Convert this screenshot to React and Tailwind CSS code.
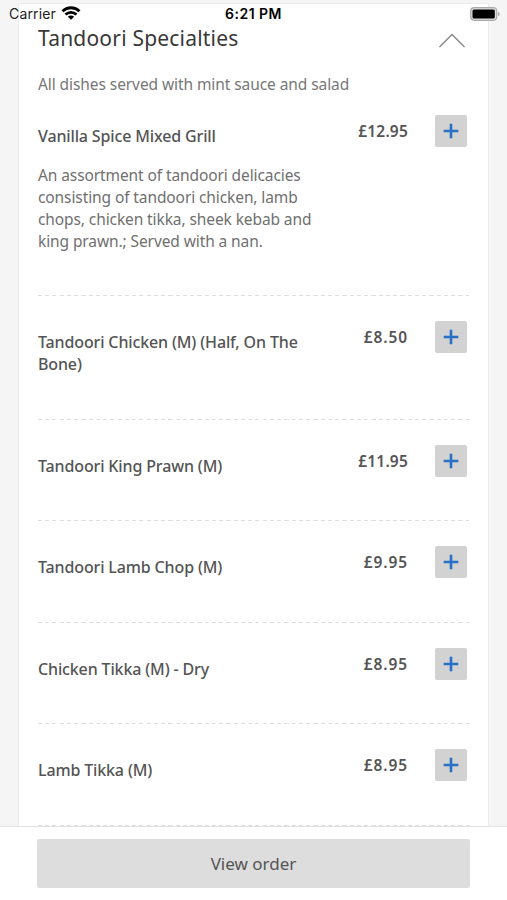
import React, { useState } from 'react';
import clsx from 'clsx';

const dishes = [
  {
    lines: ['Vanilla Spice Mixed Grill'],
    price: '£12.95',
    height: 'h-[206px]',
    description: [
      'An assortment of tandoori delicacies',
      'consisting of tandoori chicken, lamb',
      'chops, chicken tikka, sheek kebab and',
      'king prawn.; Served with a nan.',
    ],
  },
  { lines: ['Tandoori Chicken (M) (Half, On The', 'Bone)'], price: '£8.50', height: 'h-[124px]' },
  { lines: ['Tandoori King Prawn (M)'], price: '£11.95', height: 'h-[101px]' },
  { lines: ['Tandoori Lamb Chop (M)'], price: '£9.95', height: 'h-[102px]' },
  { lines: ['Chicken Tikka (M) - Dry'], price: '£8.95', height: 'h-[101px]' },
  { lines: ['Lamb Tikka (M)'], price: '£8.95', height: 'h-[102px]' },
];

const StatusBar = () => (
  <div className="absolute top-0 left-0 z-10 flex h-[27px] w-full items-center justify-between pl-[9px] pr-[7px] font-[Inter,sans-serif] text-[14px] text-[#222]">
    <div className="flex flex-1 items-center gap-[5px]">
      <span className="tracking-[0.15px]">Carrier</span>
      <svg className="mb-[1px] h-[14px] w-[20px]" viewBox="0 0 19 14" fill="none" stroke="#000" strokeWidth="2.8">
        <path d="M1 5.2C5.8 0.6 13.2 0.6 18 5.2" />
        <path d="M4 8.6C7.2 5.6 11.8 5.6 15 8.6" />
        <path d="M6.4 10.7C8.2 9.1 10.8 9.1 12.6 10.7L9.5 13.8Z" fill="#000" stroke="none" />
      </svg>
    </div>
    <span className="mr-[2px] font-semibold tracking-[0.5px] text-black">6:21 PM</span>
    <div className="flex flex-1 justify-end">
      <svg className="h-[14px] w-[30px]" viewBox="0 0 30 14">
        <rect x="0.7" y="0.7" width="26" height="12.6" rx="3.5" fill="#ddd" stroke="#aaa" strokeWidth="1.2" />
        <rect x="2.5" y="2.5" width="22.3" height="9" rx="1.5" fill="#000" />
        <path d="M28 4.8C30.2 5.6 30.2 8.4 28 9.2Z" fill="#aaa" />
      </svg>
    </div>
  </div>
);

const DishRow = ({ dish, onAdd }) => (
  <div className={clsx('flex shrink-0 flex-col', dish.height)}>
    <div className="flex flex-1 items-start">
      <div className="flex-1 whitespace-nowrap pt-[35px]">
        <h3 className="text-[16px] font-medium leading-[22px] tracking-[-0.14px] text-[#545454]">
          {dish.lines.map((line) => (
            <span key={line} className="block">{line}</span>
          ))}
        </h3>
        {dish.description && (
          <p className="mt-[17px] text-[15.5px] font-normal leading-[22px] tracking-[-0.1px] text-[#707070]">
            {dish.description.map((line) => (
              <span key={line} className="block">{line}</span>
            ))}
          </p>
        )}
      </div>
      <span className={clsx('pt-[30px] text-[15.5px] font-semibold leading-[22px] text-[#555]', dish.price.length > 5 ? 'tracking-[0.2px]' : 'tracking-[0.9px]')}>
        {dish.price}
      </span>
      <button onClick={onAdd} className="ml-[27px] mr-[2px] mt-[25px] flex h-[32px] w-[32px] items-center justify-center rounded-[2px] bg-[#d2d2d2]">
        <svg className="h-[16px] w-[16px]" viewBox="0 0 16 16" stroke="#2870c8" strokeWidth="2.6">
          <path d="M0.7 8H15.3M8 0.7V15.3" />
        </svg>
      </button>
    </div>
    <div className="h-px bg-[repeating-linear-gradient(90deg,#dedede_0px,#dedede_4px,transparent_4px,transparent_7.25px)]" />
  </div>
);

const App = () => {
  const [open, setOpen] = useState(true);
  const [count, setCount] = useState(0);

  return (
    <div className="relative flex h-[900px] w-[507px] flex-col overflow-hidden bg-[#f5f5f5] font-['Noto_Sans',sans-serif]">
      <StatusBar />
      <main className="mx-[18px] mt-[3px] flex h-[823px] flex-col overflow-hidden border-x border-t border-[#ececec] bg-white pl-[19px] pr-[19px]">
        <header className="flex h-[69px] shrink-0 items-start justify-between whitespace-nowrap">
          <h2 className="pt-[18px] text-[21px] leading-[32px] tracking-[0.2px] text-[#383838]">Tandoori Specialties</h2>
          <button onClick={() => setOpen(!open)} className="mr-[3px] mt-[29px]">
            <svg className="h-[15px] w-[28px]" viewBox="0 0 28 15" fill="none" stroke="#858585" strokeWidth="1.3">
              <path d="M1.5 14L14 1.5L26.5 14" />
            </svg>
          </button>
        </header>
        <p className="h-[17px] shrink-0 whitespace-nowrap text-[15.5px] font-normal leading-[22px] tracking-[-0.08px] text-[#777]">
          All dishes served with mint sauce and salad
        </p>
        {open && dishes.map((dish) => <DishRow key={dish.lines[0]} dish={dish} onAdd={() => setCount(count + 1)} />)}
      </main>
      <footer className="flex-1 border-t border-[#e2e2e2] bg-white px-[37px] pt-[12px]">
        <button className="h-[49px] w-full rounded-[2px] bg-[#ddd] text-[17px] text-[#555]">View order</button>
      </footer>
    </div>
  );
};

export default App;
